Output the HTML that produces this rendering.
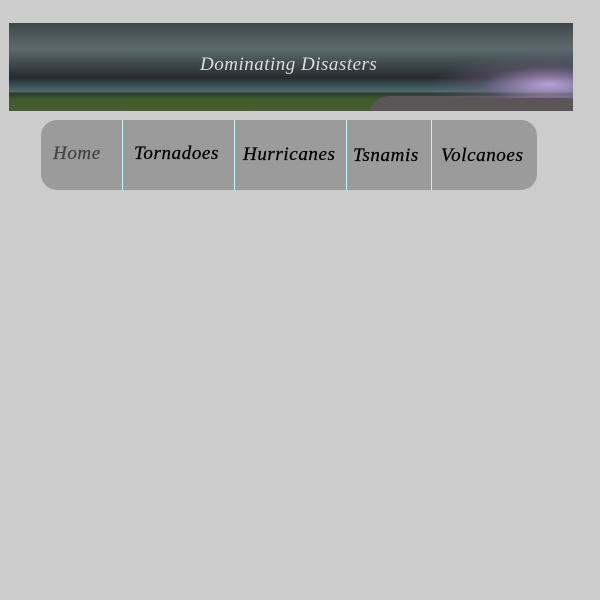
<!DOCTYPE html>
<html><head><style>
body{margin:0;background:#cccccc;width:600px;height:600px;position:relative;overflow:hidden;font-family:"Liberation Serif",serif}
#ban{position:absolute;left:9px;top:23px;width:564px;height:88px;overflow:hidden;
background:linear-gradient(180deg,#3e4548 0%,#4f5a5e 15%,#5b6a6e 30%,#3a4245 50%,#262b2e 62%,#3c5458 72%,#4f6a6e 78%,#2d3a30 80%,#3c5a28 86%,#4a5e30 100%)}
#road{position:absolute;left:360px;top:73px;width:220px;height:20px;background:#5a5556;border-radius:30px 0 0 0}
#light{position:absolute;left:420px;top:30px;width:150px;height:45px;background:radial-gradient(ellipse at 80% 70%,rgba(200,170,230,.9),rgba(120,100,140,.4) 40%,rgba(0,0,0,0) 70%)}
#title{position:absolute;left:191px;top:31px;color:#ddd;font-style:italic;font-size:19px;letter-spacing:.5px;white-space:nowrap}
#nav{position:absolute;left:41px;top:120px;width:496px;height:70px;background:#9b9b9b;border-radius:16px}
.s{position:absolute;top:0;width:1px;height:70px;background:#bff5f5}
.t{position:absolute;top:23px;font-style:italic;font-size:19px;color:#000;letter-spacing:.6px;-webkit-text-stroke:.3px #000;white-space:nowrap}
</style></head><body>
<div id="ban"><div id="road"></div><div id="light"></div><div id="title">Dominating Disasters</div></div>
<div id="nav">
<div class="s" style="left:81px"></div><div class="s" style="left:193px"></div><div class="s" style="left:305px"></div><div class="s" style="left:390px"></div>
<div class="t" style="left:12px;color:#444;-webkit-text-stroke:.3px #444">Home</div>
<div class="t" style="left:93px">Tornadoes</div>
<div class="t" style="left:202px;top:24px">Hurricanes</div>
<div class="t" style="left:312px;top:25px">Tsnamis</div>
<div class="t" style="left:400px;top:25px">Volcanoes</div>
</div>
</body></html>
